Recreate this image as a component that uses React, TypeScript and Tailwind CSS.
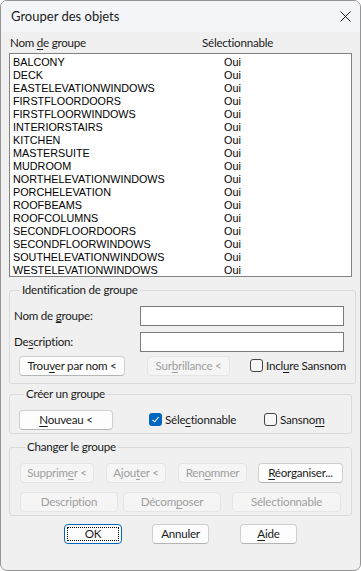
import React from "react";

const UI = { fontFamily: 'Lato, "Noto Sans", sans-serif' };
const LIST = { fontFamily: '"Liberation Sans", Arial, sans-serif' };

const groups = [
  "BALCONY",
  "DECK",
  "EASTELEVATIONWINDOWS",
  "FIRSTFLOORDOORS",
  "FIRSTFLOORWINDOWS",
  "INTERIORSTAIRS",
  "KITCHEN",
  "MASTERSUITE",
  "MUDROOM",
  "NORTHELEVATIONWINDOWS",
  "PORCHELEVATION",
  "ROOFBEAMS",
  "ROOFCOLUMNS",
  "SECONDFLOORDOORS",
  "SECONDFLOORWINDOWS",
  "SOUTHELEVATIONWINDOWS",
  "WESTELEVATIONWINDOWS",
];

function U({ children }: { children: React.ReactNode }) {
  return <span className="underline underline-offset-[2px] decoration-[1px]">{children}</span>;
}

function Btn({
  children,
  w,
  disabled,
  className = "",
}: {
  children: React.ReactNode;
  w: string;
  disabled?: boolean;
  className?: string;
}) {
  return (
    <div
      className={
        "h-[20px] flex items-center justify-center whitespace-nowrap rounded-[4px] border leading-none shrink-0 " +
        w +
        " " +
        (disabled
          ? "bg-[#f5f5f5] border-[#e5e5e5] text-[#9f9f9f] "
          : "bg-[#fdfdfd] border-[#d0d0d0] border-b-[#b5b5b5] text-[#1b1b1b] ") +
        className
      }
    >
      {children}
    </div>
  );
}

function Check({ checked }: { checked?: boolean }) {
  return checked ? (
    <div className="w-[13px] h-[13px] rounded-[3px] bg-[#0067c0] flex items-center justify-center shrink-0">
      <svg width="9" height="9" viewBox="0 0 9 9">
        <path d="M1.5 4.8 L3.6 6.8 L7.6 2.2" fill="none" stroke="white" strokeWidth="1.1" />
      </svg>
    </div>
  ) : (
    <div className="w-[13px] h-[13px] rounded-[3px] border border-[#444] bg-[#f7f7f7] shrink-0" />
  );
}

function Input() {
  return <div className="w-[204px] h-[20px] bg-white border border-[#7a7a7a] shrink-0" />;
}

export default function App() {
  return (
    <div className="w-[361px] h-[571px] bg-white" style={UI}>
      <div className="h-full rounded-[7px] border border-[#959595] bg-[#f0f0f0] overflow-hidden flex flex-col">
        {/* title bar */}
        <div className="h-[31px] shrink-0 bg-[#f3f5f8] flex items-center justify-between pl-[10px] pr-[8px]">
          <span className="text-[13px] text-[#1b1b1b]">Grouper des objets</span>
          <svg width="11" height="11" viewBox="0 0 11 11" className="mr-[1px]">
            <path d="M0.5 0.5 L10.5 10.5 M10.5 0.5 L0.5 10.5" stroke="#1b1b1b" strokeWidth="1" />
          </svg>
        </div>

        <div className="px-[8px] text-[11.6px] tracking-[-0.02em] text-[#1b1b1b] whitespace-nowrap">
          {/* header */}
          <div className="h-[21px] flex items-center">
            <span className="pl-[1px] w-[193px]">
              Nom <U>d</U>e groupe
            </span>
            <span>Sélectionnable</span>
          </div>

          {/* list */}
          <div className="h-[224px] bg-white border border-[#828282] pt-[2px] pl-[3px] tracking-normal" style={LIST}>
            {groups.map((g) => (
              <div key={g} className="h-[13px] flex text-[10.8px] leading-[13px] text-black">
                <span className="w-[211px]">{g}</span>
                <span>Oui</span>
              </div>
            ))}
          </div>

          {/* Identification de groupe */}
          <fieldset className="mt-[5px] border border-[#dadada] rounded-[3px] pl-[4px] pr-[9px] pt-[8px] pb-[7px]">
            <legend className="ml-[6px] px-[2px] leading-[16px]">Identification de groupe</legend>
            <div className="flex items-center">
              <span className="w-[126px]">
                Nom de <U>g</U>roupe:
              </span>
              <Input />
            </div>
            <div className="flex items-center mt-[6px]">
              <span className="w-[126px]">
                De<U>s</U>cription:
              </span>
              <Input />
            </div>
            <div className="flex items-center mt-[4px]">
              <Btn w="w-[106px] ml-[5px]">
                <span>
                  Trou<U>v</U>er par nom &lt;
                </span>
              </Btn>
              <Btn w="w-[83px] ml-[22px]" disabled>
                <span>
                  Sur<U>b</U>rillance &lt;
                </span>
              </Btn>
              <div className="flex items-center ml-[20px]">
                <Check />
                <span className="ml-[3px]">
                  Incl<U>u</U>re Sansnom
                </span>
              </div>
            </div>
          </fieldset>

          {/* Créer un groupe */}
          <fieldset className="mt-[2px] border border-[#dadada] rounded-[3px] pl-[9px] pt-[8px] pb-[3px]">
            <legend className="ml-[5px] px-[2px] leading-[16px]">Créer un groupe</legend>
            <div className="flex items-center">
              <Btn w="w-[94px]">
                <span>
                  <U>N</U>ouveau &lt;
                </span>
              </Btn>
              <div className="flex items-center ml-[36px] w-[115px]">
                <Check checked />
                <span className="ml-[3px]">
                  Séle<U>c</U>tionnable
                </span>
              </div>
              <div className="flex items-center">
                <Check />
                <span className="ml-[3px]">
                  Sansno<U>m</U>
                </span>
              </div>
            </div>
          </fieldset>

          {/* Changer le groupe */}
          <fieldset className="mt-[5px] border border-[#dadada] rounded-[3px] pl-[10px] pt-[8px] pb-[3px]">
            <legend className="ml-[5px] px-[2px] leading-[16px]">Changer le groupe</legend>
            <div className="flex items-center">
              <Btn w="w-[74px]" disabled>
                <span>
                  Supprim<U>e</U>r &lt;
                </span>
              </Btn>
              <Btn w="w-[60px] ml-[12px]" disabled>
                <span>
                  Ajou<U>t</U>er &lt;
                </span>
              </Btn>
              <Btn w="w-[69px] ml-[12px]" disabled>
                <span>
                  Ren<U>o</U>mmer
                </span>
              </Btn>
              <Btn w="w-[85px] ml-[11px]">
                <span>
                  <U>R</U>éorganiser...
                </span>
              </Btn>
            </div>
            <div className="flex items-center mt-[9px]">
              <Btn w="w-[98px]" disabled>
                <span>Description</span>
              </Btn>
              <Btn w="w-[98px] ml-[5px]" disabled>
                <span>
                  Décom<U>p</U>oser
                </span>
              </Btn>
              <Btn w="w-[109px] ml-[11px]" disabled>
                <span>Sélectionnable</span>
              </Btn>
            </div>
          </fieldset>

          {/* bottom buttons */}
          <div className="flex items-center mt-[8px]">
            <div className="ml-[55px] w-[58px] h-[20px] rounded-[4px] border border-[#0067c0] bg-[#fdfdfd] p-[2px]">
              <div className="w-full h-full border border-dotted border-black flex items-center justify-center leading-none">
                OK
              </div>
            </div>
            <Btn w="w-[57px] ml-[30px]">
              <span>Annuler</span>
            </Btn>
            <Btn w="w-[57px] ml-[31px]">
              <span>
                <U>A</U>ide
              </span>
            </Btn>
          </div>
        </div>
      </div>
    </div>
  );
}
